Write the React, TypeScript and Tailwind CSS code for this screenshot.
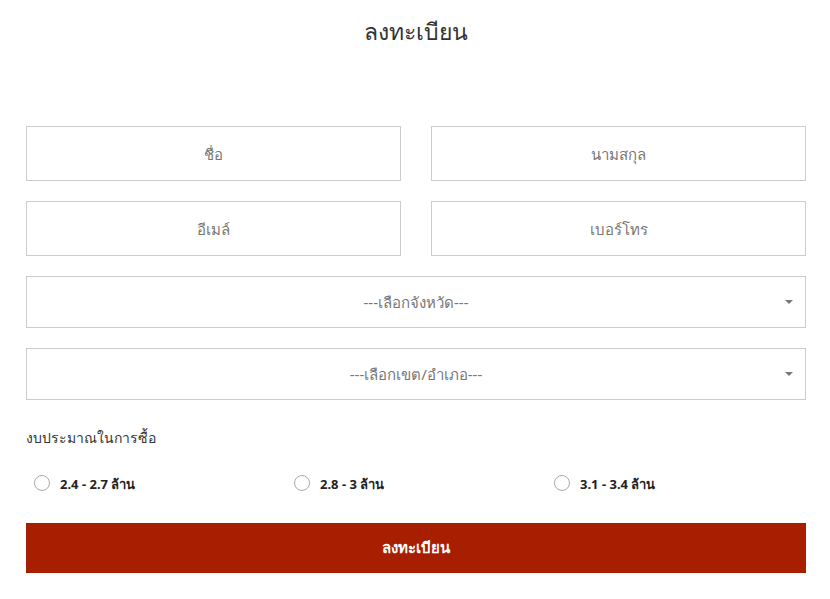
export default function App() {
  const budgets = ['2.4 - 2.7 ล้าน', '2.8 - 3 ล้าน', '3.1 - 3.4 ล้าน'];

  return (
    <div className="min-h-[599px] w-[830px] bg-white pl-[26px] pr-[24px] pt-[14px] font-['Noto_Sans',sans-serif] text-[#333]">
      <h1 className="text-center text-[23px] font-light leading-[34px] text-[#333]">ลงทะเบียน</h1>

      <form className="mt-[78px]" onSubmit={(e) => e.preventDefault()}>
        <div className="grid grid-cols-2 gap-x-[30px] gap-y-[20px]">
          <input placeholder="ชื่อ" className="h-[55px] w-full border border-[#ccc] text-center text-[15px] placeholder-[#777] outline-none" />
          <input placeholder="นามสกุล" className="h-[55px] w-full border border-[#ccc] text-center text-[15px] placeholder-[#777] outline-none" />
          <input placeholder="อีเมล์" className="h-[55px] w-full border border-[#ccc] text-center text-[15px] placeholder-[#777] outline-none" />
          <input placeholder="เบอร์โทร" className="h-[55px] w-full border border-[#ccc] text-center text-[15px] placeholder-[#777] outline-none" />
        </div>

        <div className="mt-[20px] flex h-[52px] items-center border border-[#ccc] pr-[12px] text-[15px] text-[#777]">
          <span className="flex-1 pl-[20px] text-center">---เลือกจังหวัด---</span>
          <span className="h-0 w-0 border-x-[4px] border-t-[4px] border-x-transparent border-t-[#777]" />
        </div>
        <div className="mt-[20px] flex h-[52px] items-center border border-[#ccc] pr-[12px] text-[15px] text-[#777]">
          <span className="flex-1 pl-[20px] text-center">---เลือกเขต/อำเภอ---</span>
          <span className="h-0 w-0 border-x-[4px] border-t-[4px] border-x-transparent border-t-[#777]" />
        </div>

        <p className="mt-[28px] text-[14px] leading-[20px]">งบประมาณในการซื้อ</p>

        <div className="mt-[24px] grid grid-cols-3">
          {budgets.map((b) => (
            <label key={b} className="flex items-center gap-[10px] pl-[8px] text-[13px] font-bold text-[#222]">
              <span className="h-[16px] w-[16px] rounded-full border border-[#aaa]" />
              <span className="mt-[3px]">{b}</span>
            </label>
          ))}
        </div>

        <button type="submit" className="mt-[28px] h-[50px] w-full bg-[#a81e00] text-[15px] font-bold text-white">
          ลงทะเบียน
        </button>
      </form>
    </div>
  );
}
